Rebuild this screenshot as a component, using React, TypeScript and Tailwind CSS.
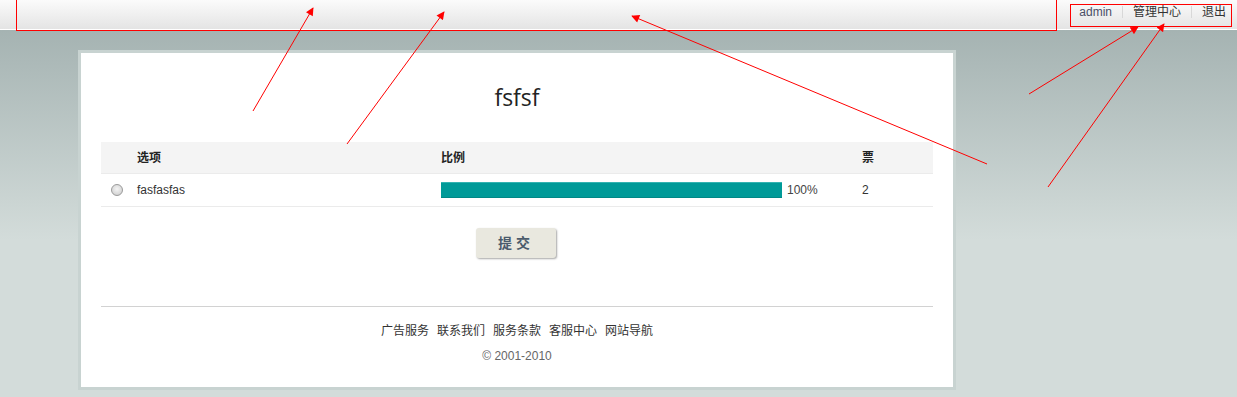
import React from "react";

const font = {
  fontFamily: '"Liberation Sans", "Noto Sans CJK SC", sans-serif',
};

const arrows = [
  { x1: 253, y1: 111, x2: 313, y2: 8 },
  { x1: 347, y1: 144, x2: 444, y2: 12 },
  { x1: 987, y1: 164, x2: 632, y2: 16 },
  { x1: 1029, y1: 94, x2: 1138, y2: 27 },
  { x1: 1048, y1: 187, x2: 1164, y2: 24 },
];

const footerLinks = ["广告服务", "联系我们", "服务条款", "客服中心", "网站导航"];

function Radio() {
  return (
    <span className="block w-[12px] h-[12px] rounded-full border border-[#9a9a9a] bg-[radial-gradient(circle_at_50%_40%,#f4f4f4,#c9c9c9)]" />
  );
}

export default function App() {
  return (
    <div
      className="relative w-[1237px] h-[397px] overflow-hidden bg-[linear-gradient(to_bottom,#a5b3b2_30px,#d3dcda_240px)] text-[12px] text-[#333]"
      style={font}
    >
      {/* Top bar */}
      <div className="h-[30px] flex justify-end items-start bg-[linear-gradient(to_bottom,#fbfbfb,#e4e4e4)] border-b border-white">
        <div className="flex items-center h-[24px] pr-[11px] leading-none">
          <span className="text-[#4a4f66]">admin</span>
          <span className="mx-[10px] w-px h-[12px] bg-[#d8d8d8]" />
          <span className="text-[#333]">管理中心</span>
          <span className="mx-[10px] w-px h-[12px] bg-[#d8d8d8]" />
          <span className="text-[#333]">退出</span>
        </div>
      </div>

      {/* Card */}
      <div className="ml-[78px] mt-[20px] w-[878px] border-[3px] border-[#c8d3d1] bg-white px-[20px] pb-[22px]">
        <div
          className="h-[89px] flex items-center justify-center text-[23px] text-[#222]"
          style={{ fontFamily: '"Open Sans", "Noto Sans CJK SC", sans-serif' }}
        >
          fsfsf
        </div>

        {/* Poll table */}
        <div>
          <div className="flex items-center h-[32px] bg-[#f4f4f4] border-b border-[#ebebeb] font-bold text-[#222]">
            <div className="w-[36px]" />
            <div className="w-[304px]">选项</div>
            <div className="w-[421px]">比例</div>
            <div>票</div>
          </div>
          <div className="flex items-center h-[33px] border-b border-[#ebebeb]">
            <div className="w-[36px] pl-[10px]">
              <Radio />
            </div>
            <div className="w-[304px] text-[#333]">fasfasfas</div>
            <div className="w-[421px] flex items-center">
              <div className="w-[341px] h-[16px] bg-[#009a98] border-t border-[#33b3b1] border-b border-b-[#008886]" />
              <span className="ml-[5px] text-[#444]">100%</span>
            </div>
            <div>2</div>
          </div>
        </div>

        <div className="flex justify-center pt-[21px] pb-[48px]">
          <button className="w-[80px] h-[30px] -ml-[2px] rounded-[3px] bg-[#e9e8df] shadow-[1px_1px_2px_rgba(0,0,0,0.35)] text-[14px] font-bold text-[#4b5b6c] tracking-[4px]">
            提交
          </button>
        </div>

        <div className="border-t border-[#d2d2d2]" />

        <div className="flex justify-center gap-[8px] pt-[15px] text-[#333]">
          {footerLinks.map((l) => (
            <span key={l}>{l}</span>
          ))}
        </div>
        <div className="text-center pt-[7px] text-[#666]">© 2001-2010</div>
      </div>

      {/* Annotations */}
      <svg
        className="absolute inset-0 pointer-events-none"
        width={1237}
        height={397}
      >
        <defs>
          <marker
            id="head"
            viewBox="0 0 10 10"
            refX="9"
            refY="5"
            markerWidth="9"
            markerHeight="8"
            markerUnits="userSpaceOnUse"
            orient="auto"
          >
            <path d="M0 0 L10 5 L0 10 z" fill="#ff0000" />
          </marker>
        </defs>
        <rect x={16.5} y={-2} width={1040} height={32.5} fill="none" stroke="#ff0000" strokeWidth={1} />
        <rect x={1070.5} y={4.5} width={161} height={22} fill="none" stroke="#ff0000" strokeWidth={1} />
        {arrows.map((a, i) => (
          <line
            key={i}
            x1={a.x1}
            y1={a.y1}
            x2={a.x2}
            y2={a.y2}
            stroke="#ff0000"
            strokeWidth={1}
            markerEnd="url(#head)"
          />
        ))}
      </svg>
    </div>
  );
}
